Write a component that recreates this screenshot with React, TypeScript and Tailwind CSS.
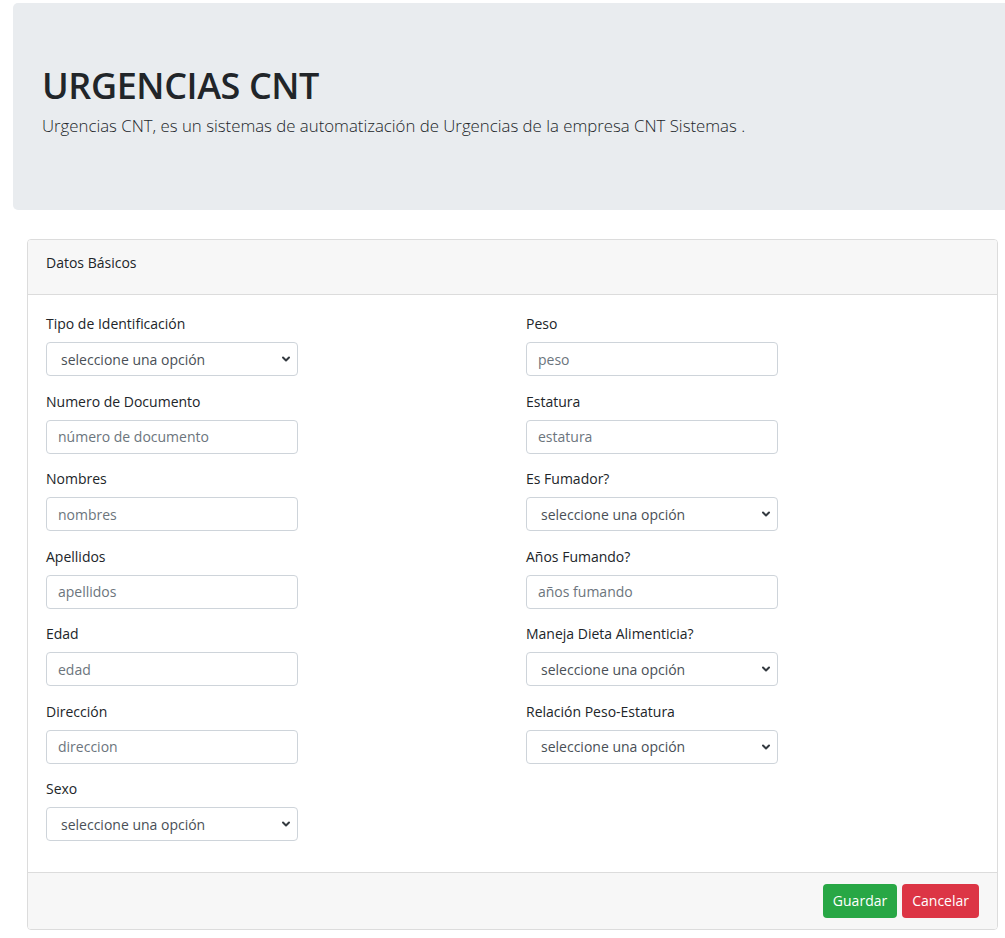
import { ChevronDown } from "lucide-react";

const left = [
  { label: "Tipo de Identificación", type: "select" },
  { label: "Numero de Documento", type: "input", ph: "número de documento" },
  { label: "Nombres", type: "input", ph: "nombres" },
  { label: "Apellidos", type: "input", ph: "apellidos" },
  { label: "Edad", type: "input", ph: "edad" },
  { label: "Dirección", type: "input", ph: "direccion" },
  { label: "Sexo", type: "select" },
];

const right = [
  { label: "Peso", type: "input", ph: "peso" },
  { label: "Estatura", type: "input", ph: "estatura" },
  { label: "Es Fumador?", type: "select" },
  { label: "Años Fumando?", type: "input", ph: "años fumando" },
  { label: "Maneja Dieta Alimenticia?", type: "select" },
  { label: "Relación Peso-Estatura", type: "select" },
];

function Field({ field }: { field: { label: string; type: string; ph?: string } }) {
  return (
    <div className="mb-[14.5px]">
      <label className="block text-[14px] leading-[21px] text-[#212529] mb-[8px]">{field.label}</label>
      {field.type === "select" ? (
        <div className="flex items-center justify-between w-[252px] h-[34px] border border-[#ced4da] rounded-[4px] bg-white pl-[14px] pr-[5px] text-[14px] text-[#495057]">
          <span>seleccione una opción</span>
          <ChevronDown size={12} strokeWidth={4} className="text-[#343a40]" />
        </div>
      ) : (
        <input
          placeholder={field.ph}
          className="block w-[252px] h-[34px] border border-[#ced4da] rounded-[4px] bg-white px-[11px] text-[14px] text-[#495057] placeholder:text-[#6c757d] outline-none"
        />
      )}
    </div>
  );
}

export default function App() {
  return (
    <div className="min-h-screen bg-white text-[#212529] font-['Open_Sans','Noto_Sans',sans-serif] pt-[3px] pb-[8px]">
      <div className="ml-[13px] bg-[#e9ecef] rounded-l-[5px] h-[207px] pl-[29px] pt-[60px]">
        <h1 className="text-[36px] leading-[46px] font-semibold text-[#212529] tracking-[-0.4px]">URGENCIAS CNT</h1>
        <p className="text-[16.8px] leading-[26px] font-light text-[#212529] mt-[4px]">
          Urgencias CNT, es un sistemas de automatización de Urgencias de la empresa CNT Sistemas .
        </p>
      </div>

      <div className="ml-[27px] mr-[7px] mt-[29px] border border-[#dcdcdc] rounded-[4px] overflow-hidden">
        <div className="bg-[#f7f7f7] h-[55px] border-b border-[#dcdcdc] px-[18px] pt-[12px] text-[14px] leading-[21px]">
          Datos Básicos
        </div>
        <div className="grid grid-cols-[480px_1fr] px-[18px] pt-[18px] pb-[16px]">
          <div>
            {left.map((f) => (
              <Field key={f.label} field={f} />
            ))}
          </div>
          <div>
            {right.map((f) => (
              <Field key={f.label} field={f} />
            ))}
          </div>
        </div>
        <div className="bg-[#f7f7f7] h-[57px] border-t border-[#dcdcdc] flex items-center justify-end gap-[5px] pr-[18px]">
          <button className="h-[34px] px-[10px] rounded-[4px] bg-[#28a745] text-white text-[14px]">Guardar</button>
          <button className="h-[34px] px-[10px] rounded-[4px] bg-[#dc3545] text-white text-[14px]">Cancelar</button>
        </div>
      </div>
    </div>
  );
}
